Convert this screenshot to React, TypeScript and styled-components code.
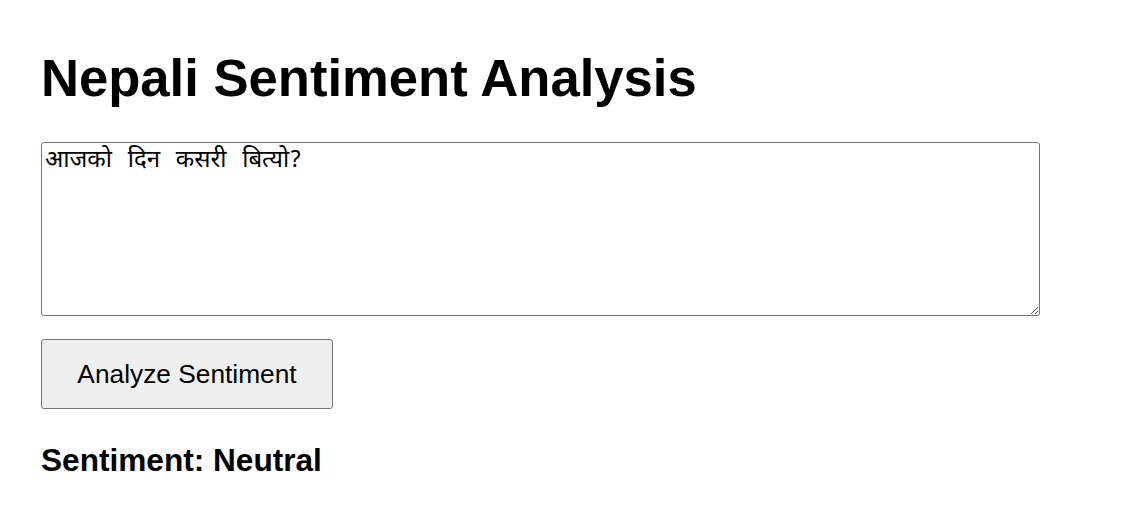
import React, { useState } from "react";
import styled, { createGlobalStyle } from "styled-components";

const GlobalStyle = createGlobalStyle`
  html, body {
    margin: 0;
    padding: 0;
    background: #ffffff;
  }
  body {
    font-family: "Liberation Sans", Arial, sans-serif;
    color: #000000;
  }
`;

const Page = styled.main`
  display: flex;
  flex-direction: column;
  align-items: flex-start;
  padding: 47px 41px 0 41px;
`;

const Title = styled.h1`
  margin: 0 0 34px 0;
  font-family: "Liberation Sans", Arial, sans-serif;
  font-size: 52.6px;
  font-weight: 700;
  line-height: 61px;
`;

const TextInput = styled.textarea`
  box-sizing: border-box;
  width: 999px;
  height: 174px;
  margin: 0 0 23px 0;
  padding: 2px 3px;
  border: 1px solid #767676;
  border-radius: 3px;
  font-family: "Noto Sans Devanagari", "Lohit Devanagari", "FreeSans", "Noto Sans", sans-serif;
  font-size: 24px;
  word-spacing: 9.5px;
  line-height: normal;
  color: #000;
  background: #fff;
  resize: both;
`;

const AnalyzeButton = styled.button`
  box-sizing: border-box;
  width: 292px;
  height: 70px;
  margin: 0 0 33px 0;
  padding: 0 34px;
  border: 1px solid #767676;
  border-radius: 3px;
  background: #efefef;
  color: #000;
  font-family: "Liberation Sans", Arial, sans-serif;
  font-size: 26.3px;
  cursor: pointer;
`;

const Result = styled.h2`
  margin: 0;
  font-family: "Liberation Sans", Arial, sans-serif;
  font-size: 31.6px;
  font-weight: 700;
  line-height: 37px;
`;

export default function App() {
  const [text, setText] = useState("आजको दिन कसरी बित्यो?");
  return (
    <>
      <GlobalStyle />
      <Page>
        <Title>Nepali Sentiment Analysis</Title>
        <TextInput value={text} onChange={(e) => setText(e.target.value)} />
        <AnalyzeButton type="button">Analyze Sentiment</AnalyzeButton>
        <Result>Sentiment: Neutral</Result>
      </Page>
    </>
  );
}
